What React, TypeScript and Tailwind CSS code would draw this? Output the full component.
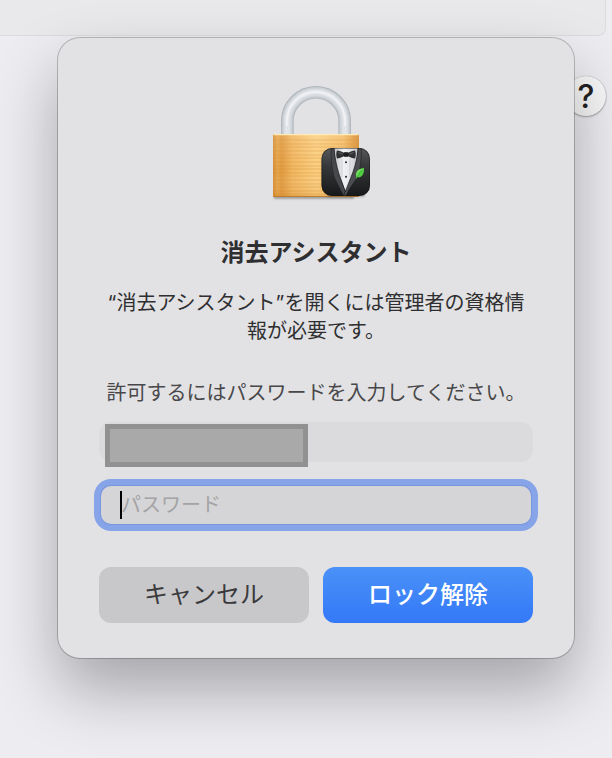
import { useState } from 'react'

function LockIcon() {
  return (
    <svg viewBox="0 4 120 124" className="h-[124px] w-[120px]" aria-hidden="true">
      <defs>
        <linearGradient id="brass" x1="0" y1="0" x2="1" y2="0">
          <stop offset="0" stopColor="#d58c30" />
          <stop offset="0.05" stopColor="#e6a54a" />
          <stop offset="0.1" stopColor="#e09a3e" />
          <stop offset="0.22" stopColor="#f1b660" />
          <stop offset="0.5" stopColor="#fbcf80" />
          <stop offset="0.82" stopColor="#f5bd68" />
          <stop offset="0.93" stopColor="#e39d40" />
          <stop offset="1" stopColor="#d58c30" />
        </linearGradient>
        <linearGradient id="brassShade" x1="0" y1="0" x2="0" y2="1">
          <stop offset="0" stopColor="#fff" stopOpacity="0.12" />
          <stop offset="0.6" stopColor="#fff" stopOpacity="0" />
          <stop offset="1" stopColor="#c87512" stopOpacity="0.2" />
        </linearGradient>
        <linearGradient id="suit" x1="0" y1="0" x2="0" y2="1">
          <stop offset="0" stopColor="#58595b" />
          <stop offset="0.35" stopColor="#38393b" />
          <stop offset="1" stopColor="#161718" />
        </linearGradient>
        <linearGradient id="shirt" x1="0" y1="0" x2="1" y2="0">
          <stop offset="0" stopColor="#bfc2c6" />
          <stop offset="0.4" stopColor="#f1f2f4" />
          <stop offset="0.6" stopColor="#e8e9ec" />
          <stop offset="1" stopColor="#c3c6ca" />
        </linearGradient>
        <linearGradient id="leaf" x1="0" y1="0" x2="1" y2="1">
          <stop offset="0" stopColor="#91f074" />
          <stop offset="1" stopColor="#29b924" />
        </linearGradient>
        <filter id="soft" x="-20%" y="-200%" width="140%" height="500%">
          <feGaussianBlur stdDeviation="0.9" />
        </filter>
        <clipPath id="suitClip">
          <rect x="65.5" y="72" width="48.5" height="48" rx="10.5" />
        </clipPath>
      </defs>

      {/* shackle */}
      <g fill="none">
        <path d="M31.3 60V45a28.7 28.7 0 0 1 57.4 0V60" stroke="#adb3ba" strokeWidth="12.6" />
        <path d="M31.3 60V45a28.7 28.7 0 0 1 57.4 0V60" stroke="#c0c5cb" strokeWidth="11.2" />
        <path d="M31.3 60V45a28.7 28.7 0 0 1 57.4 0V60" stroke="#cdd2d7" strokeWidth="9.4" />
        <path d="M31.3 60V45a28.7 28.7 0 0 1 57.4 0V60" stroke="#d8dce1" strokeWidth="7" />
        <path d="M31 60V45a29 29 0 0 1 58 0V60" stroke="#e1e4e8" strokeWidth="4.4" />
        <path d="M31 50V45a29 29 0 0 1 58 0v5" stroke="#eff1f4" strokeWidth="2.2" />
      </g>

      {/* body */}
      <rect x="18" y="119.500" width="80" height="3" fill="#555" opacity="0.6" filter="url(#soft)" />
      <rect x="17" y="58" width="86" height="63" rx="1.2" fill="url(#brass)" />
      <g stroke="#d28b30" strokeWidth="0.8" opacity="0.5">
        <path d="M18 64h84M18 68h84M18 71h84M18 75h84M18 79h84M18 82h84M18 86h84M18 90h84M18 93h84M18 97h84M18 100h84M18 104h84M18 108h84M18 111h84M18 115h84M18 118h84" />
      </g>
      <rect x="17" y="58" width="86" height="63" rx="1.2" fill="url(#brassShade)" />
      <path d="M17.5 58.6h85" stroke="#ffebb8" strokeWidth="1.3" />
      <path d="M17.5 120.4h85" stroke="#b97a2a" strokeWidth="1" />

      {/* tuxedo badge */}
      <rect x="71" y="117" width="38" height="3.600" rx="1.800" fill="#222" opacity="0.4" filter="url(#soft)" />
      <g clipPath="url(#suitClip)">
        <rect x="65" y="72" width="49" height="49" fill="url(#suit)" />
        <path d="M78 72h24l-2 18-9.5 28L80 92Z" fill="url(#shirt)" />
        <path d="M86 83v18M94 83v18" stroke="#c4c7cb" strokeWidth="0.7" />
        <path d="M78 72h-3c0 12 1 24 4 31l9 17h2.500l-1-4.500L83 98c-2.500-8-4.300-17-5-26Z" fill="#47484b" />
        <path d="M102 72h3.500c0 11-1 21-4 29l-13 19h-1.500l3-6 7-18c2.800-8 4.500-16 5-24Z" fill="#4b4c4f" />
        <path d="M78 72c.7 9 2.500 18 5 26l6.500 18M102 72c-.5 8-2.200 16-5 24l-9.500 24" stroke="#191a1b" strokeWidth="0.7" fill="none" />
        <path d="M75 72c0 12 1 24 4 31l7 14M105.500 72c0 11-1 21-4 29l-11 17" stroke="#202123" strokeWidth="0.6" fill="none" />
        <path d="M81 74.500c2 0 5 1.200 7 2.300h4c2-1.100 5-2.300 7-2.300 1 2 1 6 0 8-2 0-5-1-7-2.200h-4c-2 1.200-5 2.200-7 2.200-1-2-1-6 0-8Z" fill="#303133" />
        <path d="M82.500 76.500l4 1.700M97.500 76.500l-4 1.700" stroke="#707174" strokeWidth="0.8" />
        <rect x="87.700" y="76.200" width="4.600" height="4.600" rx="1" fill="#1d1e1f" />
        <circle cx="90" cy="86.300" r="1" fill="#26282b" />
        <circle cx="90" cy="100.700" r="1" fill="#26282b" />
        <path d="M100.300 101.300c-1-4 .2-8.600 7.600-9.300.6 5-1.500 10-6.500 9.300l-1.600 1.800Z" fill="url(#leaf)" />
        <path d="M100.800 101.200l5.200-7" stroke="#21951f" strokeWidth="0.6" />
      </g>
      <rect x="66" y="72.500" width="47.500" height="47" rx="10" fill="none" stroke="#111" strokeOpacity="0.45" />
    </svg>
  )
}

function BackgroundWindow() {
  return (
    <div className="pr-1.5">
      <div className="h-9 rounded-br-lg border-r border-b border-[#dcdcdf] bg-[#e9e9eb]" />
      <div className="flex justify-end pt-10">
        <button
          type="button"
          aria-label="ヘルプ"
          className="flex size-10 items-center justify-center rounded-full bg-[#f7f7f8] pt-0.5 font-[Inter,sans-serif] text-[32px] leading-none font-medium text-[#222] shadow-[0_0_1px_rgba(0,0,0,0.35),0_1px_2px_rgba(0,0,0,0.3)]"
        >
          ?
        </button>
      </div>
    </div>
  )
}

function AuthDialog() {
  const [password, setPassword] = useState('')

  return (
    <form
      role="dialog"
      aria-labelledby="auth-title"
      onSubmit={(e) => e.preventDefault()}
      className="flex w-full flex-col items-center rounded-[22px] bg-[#e2e2e4] px-[41px] pt-[42px] pb-[35px] shadow-[0_0_0_1px_rgba(0,0,0,0.22),0_32px_64px_rgba(0,0,0,0.3)]"
    >
      <LockIcon />
      <h1 id="auth-title" className="mt-[33px] text-2xl leading-8 font-bold text-[#2f2f31]">
        消去アシスタント
      </h1>
      <p className="mt-5 text-center text-xl leading-7 text-[#2f2f31]">
        “消去アシスタント”を開くには管理者の資格情
        <br />
        報が必要です。
      </p>
      <p className="mt-[34px] text-xl leading-7 text-[#48484a]">
        許可するにはパスワードを入力してください。
      </p>

      <div className="relative mt-[15px] w-full">
        <input
          type="text"
          aria-label="ユーザ名"
          className="block h-10 w-full rounded-xl bg-[#dbdbdd] px-5 text-xl outline-none"
        />
        <span className="absolute top-0.5 left-1.5 h-[43px] w-[203px] border-[5px] border-[#919191] bg-[#a9a9a9]" />
      </div>

      <div className="relative mt-6 w-full px-0.5">
        <input
          type="password"
          aria-label="パスワード"
          placeholder="パスワード"
          value={password}
          onChange={(e) => setPassword(e.target.value)}
          className="block h-[38px] w-full rounded-[10px] bg-[#d5d5d7] px-5 text-xl text-[#2b2b2d] shadow-[0_0_0_1px_#7797df,0_0_0_7px_#87a4e8] outline-none placeholder:text-[#a3a3a5]"
        />
        {password === '' && <span className="absolute top-[5px] left-[21px] h-7 w-0.5 bg-black" />}
      </div>

      <div className="mt-[43px] grid w-full grid-cols-2 gap-3.5">
        <button type="button" className="h-14 rounded-xl bg-[#c8c8ca] text-2xl text-[#3a3a3c]">
          キャンセル
        </button>
        <button
          type="submit"
          className="h-14 rounded-xl bg-linear-to-b from-[#4a91f8] to-[#3478f7] text-2xl font-medium text-white"
        >
          ロック解除
        </button>
      </div>
    </form>
  )
}

export default function App() {
  return (
    <div
      lang="ja"
      className="relative min-h-screen overflow-hidden bg-[#edecf1] font-[Inter,'Noto_Sans_CJK_JP',sans-serif]"
    >
      <BackgroundWindow />
      <div className="absolute inset-0 flex items-start pt-[38px] pr-[38px] pl-[58px]">
        <AuthDialog />
      </div>
    </div>
  )
}
